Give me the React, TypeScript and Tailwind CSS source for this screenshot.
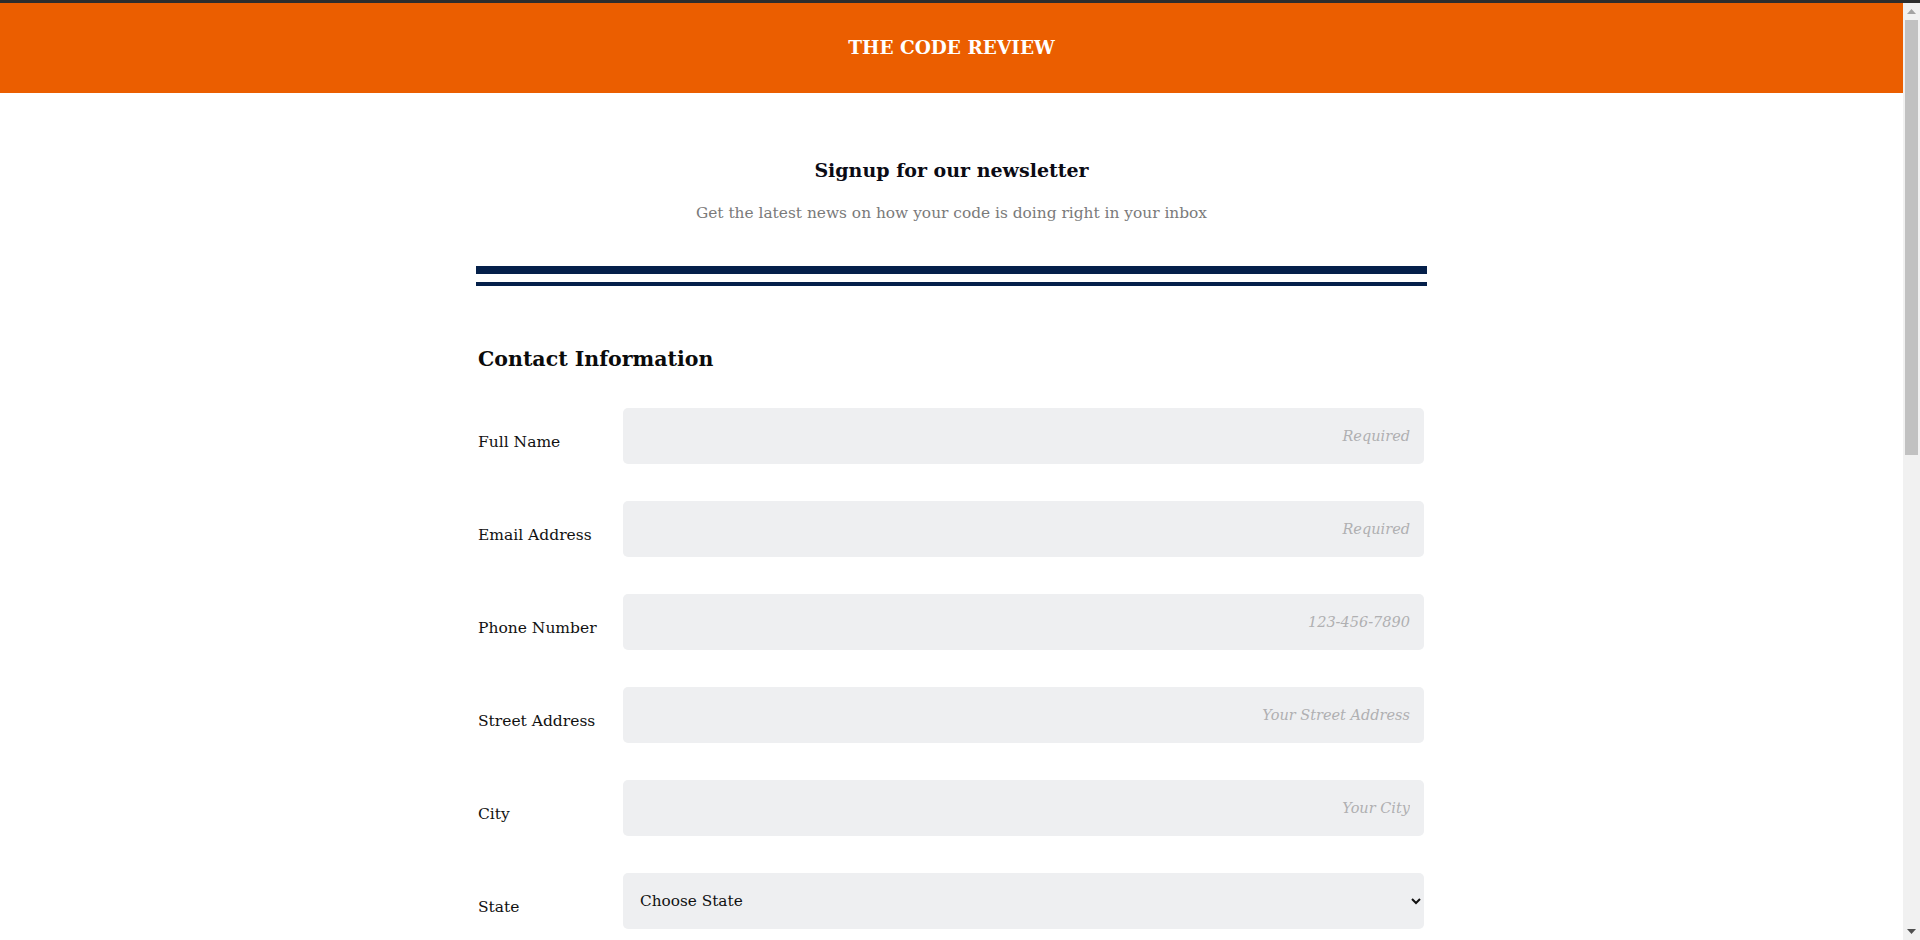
import React from "react";

const fields = [
  { label: "Full Name", placeholder: "Required", type: "text" },
  { label: "Email Address", placeholder: "Required", type: "email" },
  { label: "Phone Number", placeholder: "123-456-7890", type: "tel" },
  { label: "Street Address", placeholder: "Your Street Address", type: "text" },
  { label: "City", placeholder: "Your City", type: "text" },
];

function Row({ label, children }: { label: string; children: React.ReactNode }) {
  return (
    <div className="flex items-start h-[56px]">
      <label className="w-[145px] shrink-0 mt-[22px] text-[15.5px] leading-[24px] text-[#111]">{label}</label>
      <div className="flex-1">{children}</div>
    </div>
  );
}

function Scrollbar() {
  return (
    <div className="w-[17px] shrink-0 bg-[#f1f1f1] flex flex-col">
      <div className="h-[17px] flex items-center justify-center">
        <svg width="9" height="5" viewBox="0 0 9 5">
          <path d="M0 5 L4.5 0 L9 5 Z" fill="#a3a3a3" />
        </svg>
      </div>
      <div className="flex-1 px-[2px]">
        <div className="h-[435px] bg-[#c1c1c1]" />
      </div>
      <div className="h-[17px] flex items-center justify-center">
        <svg width="9" height="5" viewBox="0 0 9 5">
          <path d="M0 0 L4.5 5 L9 0 Z" fill="#505050" />
        </svg>
      </div>
    </div>
  );
}

export default function App() {
  return (
    <div className="h-[940px] overflow-hidden bg-white font-['DejaVu_Serif',serif] text-[#111]">
      <div className="h-[3px] bg-[#2d2d2d]" />
      <div className="flex h-[937px]">
        <div className="flex-1 overflow-hidden">
          <header className="h-[90px] bg-[#eb5e00] flex items-center justify-center">
            <h1 className="text-white font-bold text-[18.5px] leading-[28px]">THE CODE REVIEW</h1>
          </header>
          <main className="w-[951px] mx-auto">
            <div className="text-center pt-[63px]">
              <h2 className="font-bold text-[19px] leading-[28px] text-[#0b0b14]">Signup for our newsletter</h2>
              <p className="mt-[17px] text-[15.4px] leading-[24px] text-[#7a7a7a]">
                Get the latest news on how your code is doing right in your inbox
              </p>
            </div>
            <div className="mt-[41px]">
              <div className="h-[8px] bg-[#04204a]" />
              <div className="h-[4px] mt-[8px] bg-[#04204a]" />
            </div>
            <form className="pl-[2px] pr-[3px]">
              <h3 className="mt-[57px] font-bold text-[20.5px] leading-[32px] text-[#0b0b0b]">Contact Information</h3>
              <div className="mt-[33px] flex flex-col gap-[37px]">
                {fields.map((f) => (
                  <Row key={f.label} label={f.label}>
                    <input
                      type={f.type}
                      placeholder={f.placeholder}
                      className="w-full h-[56px] rounded-[5px] bg-[#eeeff1] pl-[14px] pr-[14px] text-right text-[14.5px] outline-none placeholder:italic placeholder:text-[#b0b0b2]"
                    />
                  </Row>
                ))}
                <Row label="State">
                  <select
                    defaultValue=""
                    className="w-full h-[56px] rounded-[5px] bg-[#eeeff1] pl-[13px] pr-[6px] text-[15.3px] text-[#111] outline-none"
                  >
                    <option value="">Choose State</option>
                    <option>Alabama</option>
                    <option>Alaska</option>
                    <option>Arizona</option>
                    <option>California</option>
                    <option>New York</option>
                    <option>Texas</option>
                  </select>
                </Row>
              </div>
            </form>
          </main>
        </div>
        <Scrollbar />
      </div>
    </div>
  );
}
